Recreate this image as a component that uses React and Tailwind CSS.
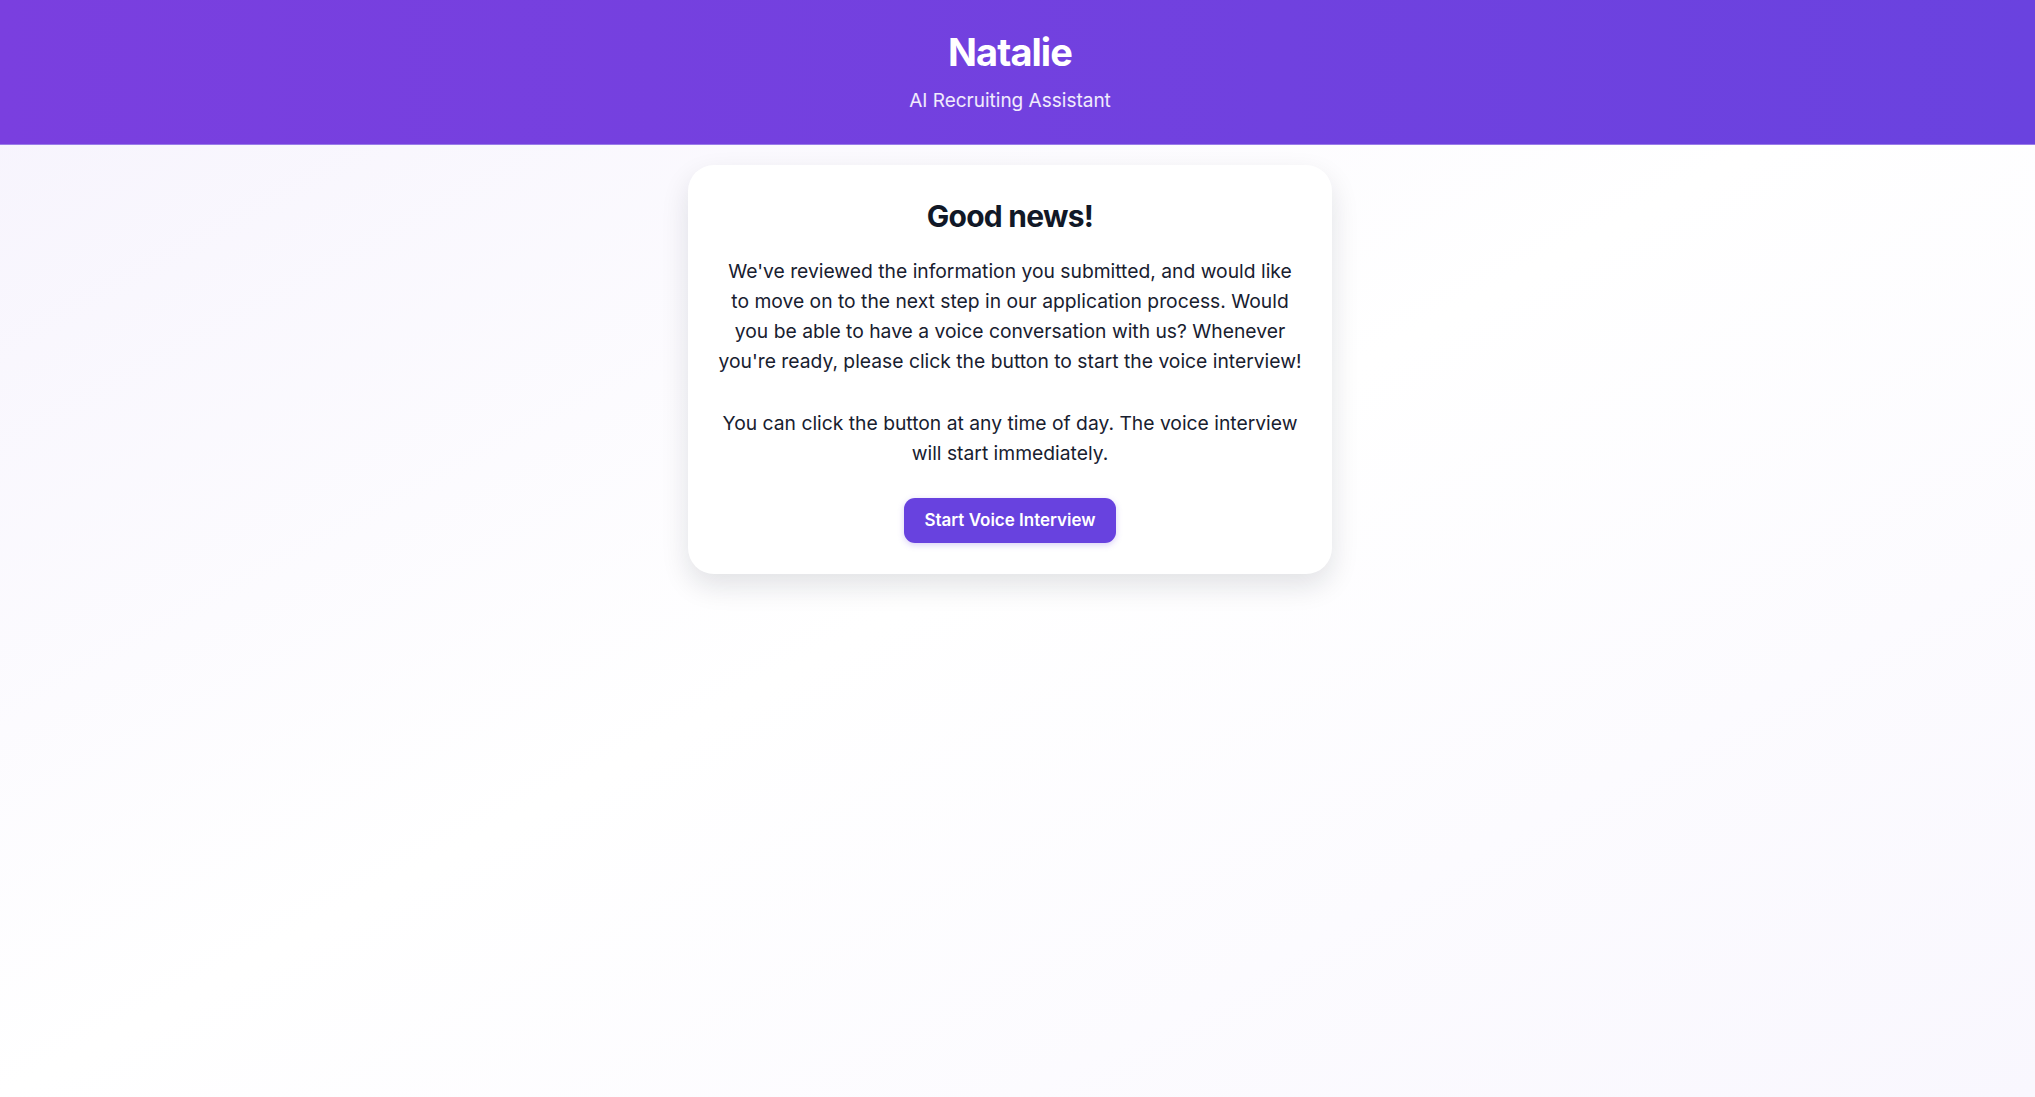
export default function App() {
  return (
    <div
      className="min-h-screen w-full bg-linear-to-br from-[#f6f3fd] via-white to-[#f9f7fe] text-[#111827]"
      style={{ fontFamily: "Inter, 'Noto Sans', sans-serif" }}
    >
      <header className="w-full bg-linear-to-r from-[#7a3fdf] to-[#6a42df] border-b border-[#9a7ce8] pt-[32px] pb-[29px] pr-[15px] text-center text-white">
        <h1 className="text-[38px] leading-[40px] font-bold tracking-tight">Natalie</h1>
        <p className="mt-[15px] text-[19px] leading-[28px] text-white/90">AI Recruiting Assistant</p>
      </header>

      <main className="flex justify-center pt-5 pr-[15px]">
        <div className="w-[644px] rounded-[26px] bg-white px-[28px] pt-[33px] pb-[31px] text-center shadow-[0_12px_28px_rgba(17,24,39,0.12)]">
          <h2 className="text-[30px] leading-[36px] font-bold tracking-tight text-[#111827]">Good news!</h2>
          <p className="mt-[22px] text-[19.3px] leading-[30px] text-[#18202f]">
            We've reviewed the information you submitted, and would like
            <br />
            to move on to the next step in our application process. Would
            <br />
            you be able to have a voice conversation with us? Whenever
            <br />
            you're ready, please click the button to start the voice interview!
          </p>
          <p className="mt-[32px] text-[19.3px] leading-[30px] text-[#18202f]">
            You can click the button at any time of day. The voice interview
            <br />
            will start immediately.
          </p>
          <button className="mt-[30px] h-[45px] rounded-[11px] bg-[#6842df] px-5 text-[17px] font-semibold text-white shadow-[0_2px_6px_rgba(104,66,223,0.25)]">
            Start Voice Interview
          </button>
        </div>
      </main>
    </div>
  );
}
